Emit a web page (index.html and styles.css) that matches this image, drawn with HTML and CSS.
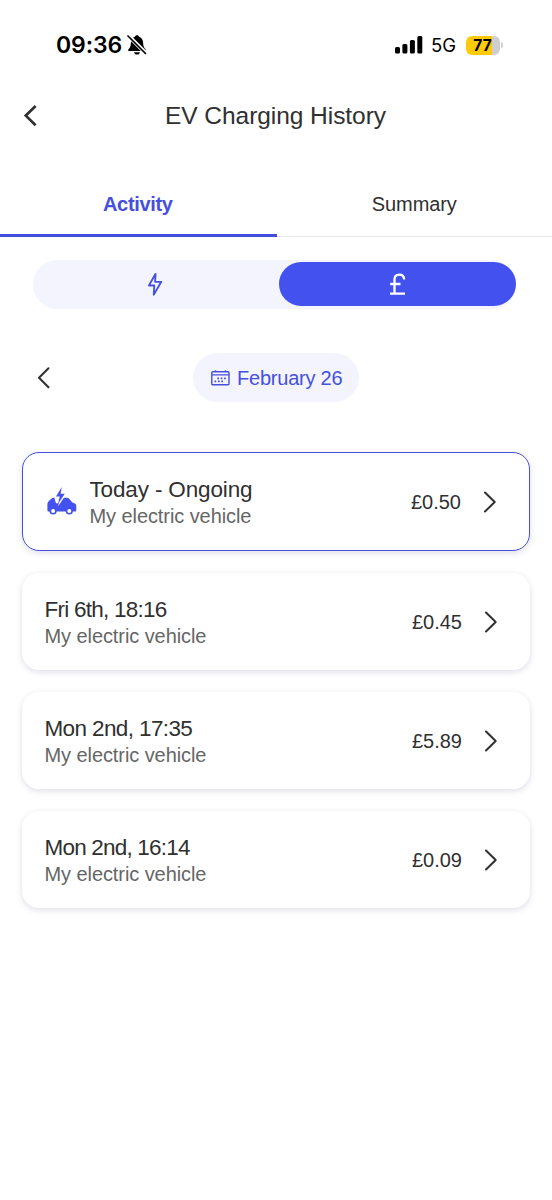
FILE: index.html
```html
<!DOCTYPE html>
<html lang="en">
<head>
<meta charset="utf-8">
<title>EV Charging History</title>
<link rel="stylesheet" href="styles.css">
</head>
<body>
<div class="status">
  <span class="clock">09:36</span>
  <svg class="bell" width="20" height="22" viewBox="0 0 20 22"><path d="M10 1.200c-1.100 0-1.900.6-2.200 1.500C5 3.700 4 6 3.900 8.800 3.800 12 3.200 13.500 1.500 15.200c-.7.700-.3 1.900.7 1.900h15.600c1 0 1.400-1.200.7-1.900-1.700-1.700-2.300-3.200-2.400-6.400C16 6 15 3.700 12.200 2.700 11.900 1.800 11.100 1.200 10 1.200zM7 18.200h6c-.4 1.500-1.500 2.300-3 2.300s-2.600-.8-3-2.300z"/><path class="cut" d="M1 1.400L18.500 18.900"/><path class="slash" d="M1 2L18.500 19.500"/></svg>
  <svg class="signal" width="28" height="18" viewBox="0 0 28 18"><rect x="0" y="11" width="5" height="6.500" rx="1.500"/><rect x="7.400" y="8" width="5" height="9.500" rx="1.500"/><rect x="14.900" y="4" width="5" height="13.500" rx="1.500"/><rect x="22.300" y="0" width="5" height="17.500" rx="1.500"/></svg>
  <span class="network">5G</span>
  <span class="battery">77</span><span class="battery-tip"></span>
</div>
<header class="header">
  <svg width="14" height="22" viewBox="0 0 14 22" class="arrow bold"><path d="M12.600 1L2.800 10.600l9.800 9.600"/></svg>
  <h1>EV Charging History</h1>
</header>
<nav class="tabs">
  <a class="tab active">Activity</a>
  <a class="tab">Summary</a>
</nav>
<div class="toggle">
  <div class="option"><svg class="bolt" width="15" height="25" viewBox="0 0 15 25"><path d="M7.600 1.800L.9 13.500h5.400l-.6 9.300 7.600-13H7.100z"/></svg></div>
  <div class="option selected"><svg width="17" height="23" viewBox="0 0 17 23" class="pound"><path d="M15.200 6.500C15 3.200 13 1.600 10.300 1.600 7.300 1.600 5.500 3.500 5.500 6.500v14.200M1.200 11h10.300M1 20.700h15"/></svg></div>
</div>
<div class="month-row">
  <svg width="14" height="22" viewBox="0 0 14 22" class="arrow"><path d="M11.500 1.300L2 10.800l9.500 9.500"/></svg>
  <div class="month">
    <svg class="calendar" width="19" height="16" viewBox="0 0 19 16"><rect x=".8" y="1.800" width="17.200" height="13" rx="1"/><path d="M1 4.900h17M4.500.3V2M14.500.3V2"/><path class="days" d="M6.300 8.300h9.500M3.500 11.300h9.500"/></svg>
    <span>February 26</span>
  </div>
</div>
<main class="list">
  <article class="card ongoing">
    <svg class="car" width="30" height="29" viewBox="0 0 30 29"><path d="M2 24.500C1 24.500.4 24 .4 22.900V17.300c0-1.400.5-2.400 1.500-3.200l2.600-2.500c.6-.6 1.200-.8 2.100-.8h13.300c1 0 1.700.3 2.300 1l3.200 3.800 1.800.6c1.400.5 2.100 1.500 2.100 2.900v3.900c0 1-.5 1.500-1.500 1.500z"/><path class="gap" d="M14.700-1L7.500 11.500 9 16.200h3l-1.200 3.600 8.800-13-4-1z"/><path d="M14.800 0L9 9.600h3.800l-2 7.600 7-10.400h-4.200z"/><circle cx="6.100" cy="24" r="3.600"/><circle cx="22.300" cy="24" r="3.600"/><circle class="hub" cx="6.100" cy="24" r="2"/><circle class="hub" cx="22.300" cy="24" r="2"/></svg>
    <div class="info"><h2 class="today">Today - Ongoing</h2><p>My electric vehicle</p></div>
    <span class="cost">£0.50</span>
    <svg width="14" height="22" viewBox="0 0 14 22" class="arrow"><path d="M2 1.500l9.700 9.500L2 20.500"/></svg>
  </article>
  <article class="card">
    <div class="info"><h2 class="friday">Fri 6th, 18:16</h2><p>My electric vehicle</p></div>
    <span class="cost">£0.45</span>
    <svg width="14" height="22" viewBox="0 0 14 22" class="arrow"><path d="M2 1.500l9.700 9.500L2 20.500"/></svg>
  </article>
  <article class="card">
    <div class="info"><h2 class="monday">Mon 2nd, 17:35</h2><p>My electric vehicle</p></div>
    <span class="cost">£5.89</span>
    <svg width="14" height="22" viewBox="0 0 14 22" class="arrow"><path d="M2 1.500l9.700 9.500L2 20.500"/></svg>
  </article>
  <article class="card">
    <div class="info"><h2 class="monday late">Mon 2nd, 16:14</h2><p>My electric vehicle</p></div>
    <span class="cost">£0.09</span>
    <svg width="14" height="22" viewBox="0 0 14 22" class="arrow"><path d="M2 1.500l9.700 9.500L2 20.500"/></svg>
  </article>
</main>
</body>
</html>
```

FILE: styles.css
```css
* { box-sizing: border-box; }
body {
  margin: 0;
  width: 552px;
  height: 1200px;
  background: #fff;
  color: #303030;
  font-family: "Liberation Sans", Arial, sans-serif;
  font-size: 20px;
}
h1, h2, p { margin: 0; font-weight: 400; white-space: nowrap; }
svg { display: block; flex: none; }

.status {
  height: 90px;
  padding: 0 50px 0 56px;
  display: flex;
  align-items: center;
  color: #000;
  font-family: Inter, sans-serif;
}
.clock { font-size: 23px; font-weight: 600; width: 71px; letter-spacing: -.1px; }
.signal { margin-left: auto; margin-right: 8px; }
.network { font-size: 18.500px; width: 35px; letter-spacing: -.1px; }
.battery {
  width: 34px;
  height: 19px;
  border-radius: 6px;
  background: linear-gradient(90deg, #ffcb08 77%, #ceced0 77%);
  font-size: 15.500px;
  font-weight: 700;
  line-height: 19px;
  text-align: center;
  padding-right: 1px;
}
.battery-tip { width: 2px; height: 6px; margin-left: 1px; margin-right: -1px; border-radius: 0 2px 2px 0; background: #d2d2d2; }
.cut { stroke: #fff; stroke-width: 4; }
.slash { stroke: #000; stroke-width: 1.700; stroke-linecap: round; }

.header {
  height: 51px;
  padding: 0 24px 0 23px;
  display: grid;
  grid-template-columns: 14px 1fr 14px;
  align-items: center;
  text-align: center;
}
.header h1 { font-size: 24.500px; letter-spacing: -.05px; padding-top: 1px; }
.arrow { fill: none; stroke: #303030; stroke-width: 2; stroke-linecap: round; stroke-linejoin: round; }
.arrow.bold { stroke-width: 2.700; stroke-linecap: butt; stroke-linejoin: miter; }

.tabs { display: flex; height: 97px; padding-top: 30px; }
.tab { flex: 1; height: 66px; line-height: 66px; text-align: center; border-bottom: 1.500px solid #e8e9ef; letter-spacing: -.1px; }
.tab.active { color: #4450dc; font-weight: 700; border-bottom: 3px solid #434edc; letter-spacing: -.35px; padding-right: 1px; }

.toggle {
  margin: 22px 36px 0 33px;
  height: 49px;
  padding: 2px 0 3px;
  display: grid;
  grid-template-columns: 245.500px 1fr;
  border-radius: 25px;
  background: #f3f4fe;
}
.option { display: flex; align-items: center; justify-content: center; }
.option.selected { background: #4351ee; border-radius: 22px; }
.bolt, .pound { fill: none; stroke-width: 1.800; stroke: #434ee2; stroke-linejoin: round; }
.pound { stroke: #fff; stroke-width: 2.300; }

.month-row { height: 49px; margin-top: 44px; padding-left: 37px; display: flex; align-items: center; }
.month {
  margin-left: 142px;
  width: 166px;
  height: 49px;
  padding-left: 18px;
  display: flex;
  align-items: center;
  gap: 7px;
  border-radius: 25px;
  background: #f3f4fe;
  color: #4650dc;
  white-space: nowrap;
  letter-spacing: -.22px;
}
.month span { padding-top: 1px; }
.calendar { fill: none; stroke: #4650dc; stroke-width: 1.400; }
.calendar .days { stroke-width: 1.800; stroke-dasharray: 1.700 1.700; }

.list { padding: 50px 22px 0; }
.card {
  height: 97px;
  margin-bottom: 22px;
  padding: 0 32px 0 22.500px;
  display: flex;
  align-items: center;
  border-radius: 17px;
  background: #fff;
  box-shadow: 0 2px 6px rgba(50, 55, 110, .16);
}
.card.ongoing { height: 99px; padding: 0 32px 0 24px; border: 1.500px solid #4650dc; }
.car { fill: #4351ee; margin-right: 12.500px; }
.car .gap, .car .hub { fill: #fff; }
.info { flex: 1; padding-top: 2px; }
.info h2 { font-size: 22.500px; line-height: 27px; }
.info h2.today { letter-spacing: -.15px; }
.info h2.friday { letter-spacing: -.75px; }
.info h2.monday { letter-spacing: -.62px; }
.info h2.late { letter-spacing: -.8px; }
.info p { line-height: 27px; color: #666; letter-spacing: -.08px; }
.cost { margin-right: 22px; padding-top: 1px; }
```
